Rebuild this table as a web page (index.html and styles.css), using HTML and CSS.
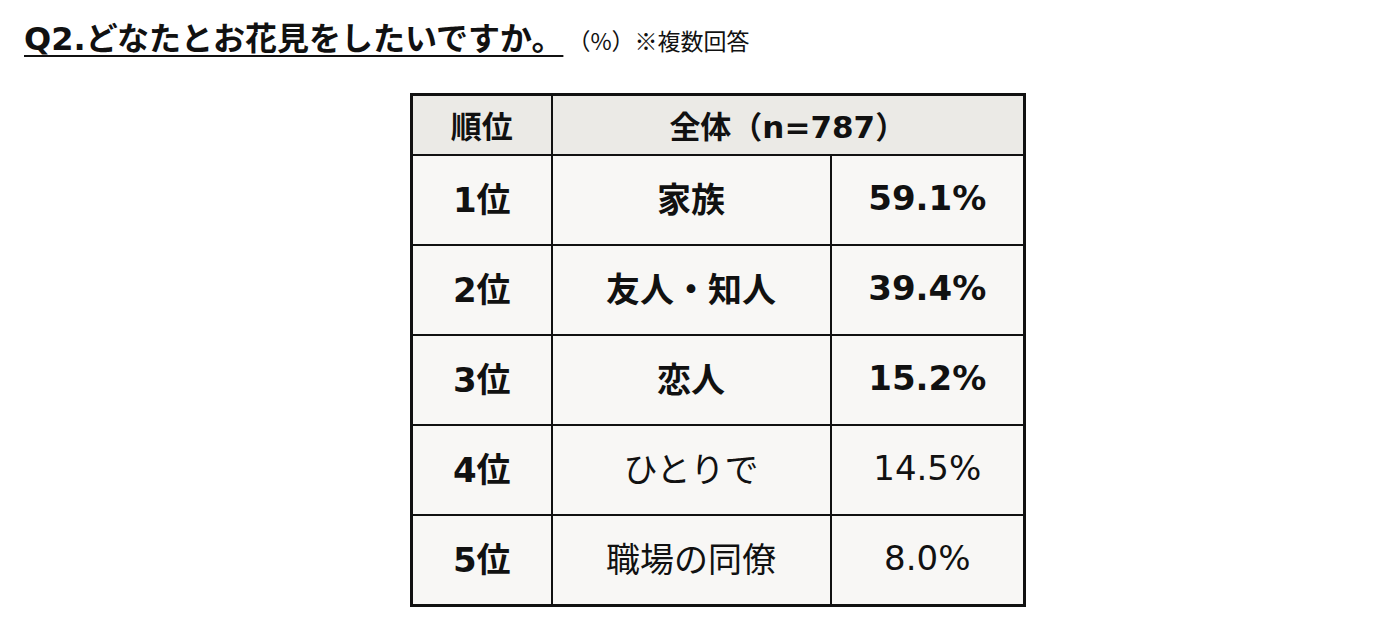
FILE: index.html
```html
<!DOCTYPE html>
<html lang="ja">
<head>
<meta charset="utf-8">
<title>Q2</title>
<link rel="stylesheet" href="styles.css">
</head>
<body>
<div class="page">
  <h1 class="title"><span class="q">Q2.どなたとお花見をしたいですか。</span><span class="note">（%）※複数回答</span></h1>
  <table class="rank">
    <colgroup>
      <col class="c1"><col class="c2"><col class="c3">
    </colgroup>
    <thead>
      <tr><th>順位</th><th colspan="2">全体（n=787）</th></tr>
    </thead>
    <tbody>
      <tr><th>1位</th><td class="b">家族</td><td class="b">59.1%</td></tr>
      <tr><th>2位</th><td class="b">友人・知人</td><td class="b">39.4%</td></tr>
      <tr><th>3位</th><td class="b">恋人</td><td class="b">15.2%</td></tr>
      <tr><th>4位</th><td>ひとりで</td><td>14.5%</td></tr>
      <tr><th>5位</th><td>職場の同僚</td><td>8.0%</td></tr>
    </tbody>
  </table>
</div>
</body>
</html>
```
FILE: styles.css
```css
html, body {
  margin: 0;
  padding: 0;
  background: #ffffff;
}
body {
  font-family: "DejaVu Sans", "Noto Sans CJK JP", sans-serif;
  color: #111111;
}
.page {
  padding: 20px 0 0 24px;
}
.title {
  margin: 0;
  font-weight: normal;
  display: flex;
  align-items: baseline;
  line-height: 38px;
}
.q {
  font-size: 32px;
  font-weight: bold;
  text-decoration: underline;
  text-decoration-thickness: 2px;
  text-underline-offset: 5px;
}
.note {
  font-family: "Noto Sans CJK JP", sans-serif;
  font-size: 23px;
  margin-left: 4px;
}
.rank {
  margin: 34px 0 0 386px;
  border-collapse: collapse;
  width: 613px;
  table-layout: fixed;
  border: 3px solid #111111;
}
.c1 { width: 140px; }
.c2 { width: 279px; }
.c3 { width: 194px; }
.rank th, .rank td {
  border: 2px solid #111111;
  text-align: center;
  vertical-align: middle;
  padding: 0;
  font-size: 34px;
}
.rank thead th {
  height: 56px;
  padding-bottom: 2px;
  background: #ebeae6;
  font-size: 31px;
  font-weight: bold;
}
.rank tbody th, .rank tbody td {
  height: 83px;
  padding-bottom: 5px;
  background: #f8f7f5;
}
.rank tbody th {
  font-weight: bold;
}
.rank td {
  font-weight: normal;
}
.rank td.b {
  font-weight: bold;
}
```
